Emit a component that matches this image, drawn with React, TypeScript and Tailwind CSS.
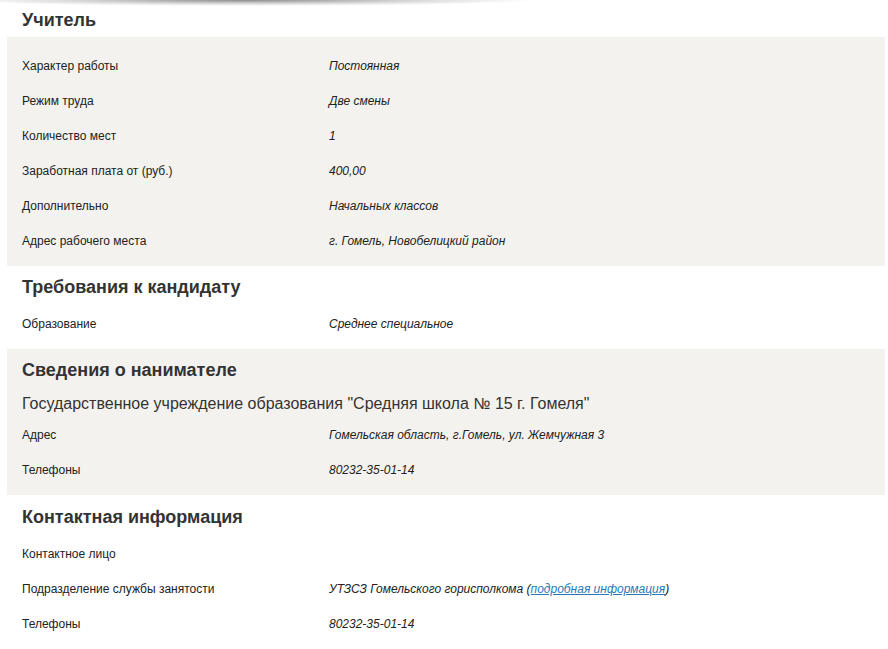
import React from "react";

type Row = { label: string; value?: React.ReactNode };

function Rows({ rows }: { rows: Row[] }) {
  return (
    <div className="flex flex-col">
      {rows.map((r, i) => (
        <div key={i} className="flex h-[35px] items-center pt-[3px] text-[12px] leading-[16px] text-[#222]">
          <div className="w-[307px] shrink-0">{r.label}</div>
          <div className="italic">{r.value}</div>
        </div>
      ))}
    </div>
  );
}

function Heading({ children }: { children: React.ReactNode }) {
  return <h2 className="h-[24px] text-[18px] font-bold leading-[24px] text-[#333]">{children}</h2>;
}

export default function App() {
  return (
    <div
      className="relative min-h-[649px] w-[888px] bg-white"
      style={{ fontFamily: '"Liberation Sans", Arial, sans-serif' }}
    >
      <div className="pointer-events-none absolute left-0 top-0 h-[8px] w-[700px] bg-[radial-gradient(ellipse_55%_100%_at_35%_0%,rgba(0,0,0,0.45),rgba(0,0,0,0.15)_45%,transparent_75%)]" />

      <div className="pl-[22px] pt-[8px]">
        <Heading>Учитель</Heading>
      </div>

      <section className="ml-[7px] mt-[5px] w-[878px] bg-[#f3f2ee] pb-[9px] pl-[15px] pt-[10px]">
        <Rows
          rows={[
            { label: "Характер работы", value: "Постоянная" },
            { label: "Режим труда", value: "Две смены" },
            { label: "Количество мест", value: "1" },
            { label: "Заработная плата от (руб.)", value: "400,00" },
            { label: "Дополнительно", value: "Начальных классов" },
            { label: "Адрес рабочего места", value: "г. Гомель, Новобелицкий район" },
          ]}
        />
      </section>

      <section className="ml-[7px] w-[878px] pb-[9px] pl-[15px] pt-[9px]">
        <Heading>Требования к кандидату</Heading>
        <div className="mt-[6px]">
          <Rows rows={[{ label: "Образование", value: "Среднее специальное" }]} />
        </div>
      </section>

      <section className="ml-[7px] w-[878px] bg-[#f3f2ee] pb-[9px] pl-[15px] pt-[9px]">
        <Heading>Сведения о нанимателе</Heading>
        <div className="mt-[12px] h-[20px] text-[16px] leading-[20px] text-[#333]">
          Государственное учреждение образования "Средняя школа № 15 г. Гомеля"
        </div>
        <div className="mt-[2px]">
          <Rows
            rows={[
              { label: "Адрес", value: "Гомельская область, г.Гомель, ул. Жемчужная 3" },
              { label: "Телефоны", value: "80232-35-01-14" },
            ]}
          />
        </div>
      </section>

      <section className="ml-[7px] w-[878px] pb-[9px] pl-[15px] pt-[10px]">
        <Heading>Контактная информация</Heading>
        <div className="mt-[6px]">
          <Rows
            rows={[
              { label: "Контактное лицо", value: "" },
              {
                label: "Подразделение службы занятости",
                value: (
                  <>
                    УТЗСЗ Гомельского горисполкома (
                    <a href="#" className="text-[#2a78b8] underline">
                      подробная информация
                    </a>
                    )
                  </>
                ),
              },
              { label: "Телефоны", value: "80232-35-01-14" },
            ]}
          />
        </div>
      </section>
    </div>
  );
}
